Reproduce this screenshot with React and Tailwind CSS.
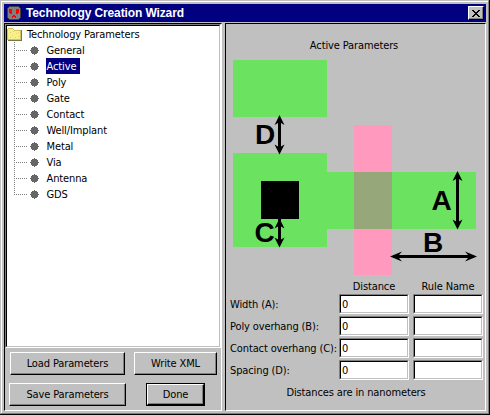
import React from "react";

const items = ["General", "Active", "Poly", "Gate", "Contact", "Well/Implant", "Metal", "Via", "Antenna", "GDS"];

const fields = ["Width (A):", "Poly overhang (B):", "Contact overhang (C):", "Spacing (D):"];

function SocketIcon() {
  return (
    <svg width="16" height="16" viewBox="0 0 16 16" shapeRendering="crispEdges">
      <path d="M3 1h10v1h1v1h1v10h-1v1h-1v1H3v-1H2v-1H1V3h1V2h1z" fill="#404040" />
      <path d="M3 2h10v1h1v10h-1v1H3v-1H2V3h1z" fill="#808080" />
      <path d="M3 4h3v5H4V8H3zM10 4h3v4h-1v1h-2zM7 10h2v1h1v2H9v-1H7v1H6v-2h1z" fill="#ff0000" />
    </svg>
  );
}

function FolderIcon() {
  return (
    <svg width="16" height="16" viewBox="0 0 16 16" shapeRendering="crispEdges">
      <path d="M1 2h5v1h1v1h8v11H1v-1H0V3h1z" fill="#77774c" />
      <path d="M1 2h5v1h1v1h7v10H0V3h1z" fill="#cfc45c" />
      <path d="M1 3h5v1h1v1h6v8H1z" fill="#f7f08c" />
      <path d="M3 6h1v1H3zM6 5h1v1H6zM9 7h1v1H9zM11 6h1v1h-1zM5 9h1v1H5zM11 10h1v1h-1zM8 11h1v1H8zM3 11h1v1H3z" fill="#e2cf72" />
    </svg>
  );
}

function Button({ className, children }) {
  return (
    <button
      className={
        "flex items-center justify-center border border-t-white border-l-white border-r-black border-b-black bg-[#c0c0c0] whitespace-nowrap shadow-[inset_-1px_-1px_0_#808080] " +
        className
      }
    >
      {children}
    </button>
  );
}

function Field({ value }) {
  return (
    <div className="h-5 w-[70px] border border-t-[#808080] border-l-[#808080] border-r-white border-b-white">
      <div className="h-[18px] border border-t-black border-l-black border-r-[#c0c0c0] border-b-[#c0c0c0] bg-white pt-px pl-px">
        {value}
      </div>
    </div>
  );
}

function Diagram() {
  return (
    <svg width="260" height="220" viewBox="226 60 260 220" className="block">
      <g shapeRendering="crispEdges">
        <path d="M233 60h94v57h-94zM233 153h94v19h149v57H327v18h-94z" fill="#6be361" />
        <path d="M354 125h38v150h-38z" fill="#ff99be" />
        <path d="M354 172h38v57h-38z" fill="#96a87a" />
        <path d="M261 181h38v38h-38z" />
      </g>
      <path d="M279.5 118v33M279.5 219v25M457.5 174v52M394 256.5h80" stroke="#000" strokeWidth="3" />
      <path d="M279.5 115l5 10-3.500-2h-3l-3.500 2zM279.500 154.500l5-10-3.500 2h-3l-3.500-2z" />
      <path d="M279.500 218.500l5 10-3.500-2h-3l-3.500 2zM279.500 247.500l5-10-3.500 2h-3l-3.500-2z" />
      <path d="M457.500 171l5 10-3.500-2h-3l-3.500 2zM457.500 229.500l5-10-3.500 2h-3l-3.500-2z" />
      <path d="M390 256.500l12-5-3 3.500v3l3 3.500zM477 256.500l-12-5 3 3.500v3l-3 3.500z" />
      <g className="font-['Liberation_Sans',Arial,sans-serif] text-[28px] font-bold tracking-normal">
        <text x="255" y="144">D</text>
        <text x="254.500" y="242">C</text>
        <text x="431.500" y="210">A</text>
        <text x="423" y="252">B</text>
      </g>
    </svg>
  );
}

export default function App() {
  return (
    <div className="h-[415px] w-[490px] overflow-hidden border-r border-b border-black bg-[#c0c0c0] font-['DejaVu_Sans_Condensed','DejaVu_Sans',sans-serif] text-[11px] leading-4 tracking-[-0.12px] text-black">
      <div className="h-[414px] w-[489px] border-t border-l border-r border-b border-t-[#c0c0c0] border-l-[#c0c0c0] border-r-[#808080] border-b-[#808080]">
        <div className="h-[412px] w-[487px] border-t border-l border-white pt-[2px] pl-[2px]">
          <header className="flex h-[18px] w-[482px] items-center bg-[#000080] pr-[2px] pl-[2px]">
            <SocketIcon />
            <h1 className="ml-[4px] flex-1 font-['Liberation_Sans',Arial,sans-serif] text-[12px] font-bold whitespace-nowrap text-white">
              Technology Creation Wizard
            </h1>
            <button className="flex h-[14px] w-4 items-center justify-center border border-t-white border-l-white border-r-black border-b-black bg-[#c0c0c0] shadow-[inset_-1px_-1px_0_#808080]">
              <svg width="8" height="7" viewBox="0 0 8 7" shapeRendering="crispEdges">
                <path d="M0 0h2v1h1v1h2V1h1V0h2v1H7v1H6v1H5v1h1v1h1v1h1v1H6V6H5V5H3v1H2v1H0V6h1V5h1V4h1V3H2V2H1V1H0z" />
              </svg>
            </button>
          </header>
          <main className="mt-px flex h-[388px] w-[482px]">
            <section className="w-[218px] border-t border-r border-b border-l border-t-black border-r-white border-b-white border-l-black">
              <div className="h-[324px] border border-t-[#808080] border-l-[#808080] border-r-white border-b-white">
                <div className="h-[322px] border border-t-black border-l-black border-r-[#c0c0c0] border-b-[#c0c0c0] bg-white">
                  <div className="flex h-4 items-center">
                    <FolderIcon />
                    <span className="ml-1 h-4 pt-px whitespace-nowrap">Technology Parameters</span>
                  </div>
                  <ul>
                    {items.map((name, i) => (
                      <li key={name} className="flex h-4 items-center pl-[7px]">
                        <svg width="32" height="16" viewBox="0 0 32 16" shapeRendering="crispEdges">
                          <path d={i === items.length - 1 ? "M.5 0V9" : "M.5 0V16"} stroke="#808080" strokeDasharray="1 1" />
                          <path d="M0 8.500H14" stroke="#808080" strokeDasharray="1 1" />
                          <path d="M16 8h9v1h-9zM17 6h7v5h-7zM18 5h5v7h-5zM20 4h1v9h-1z" fill="#666" />
                        </svg>
                        <span
                          className={
                            "h-4 pt-px pl-[0.5px] whitespace-nowrap " + (name === "Active" ? "w-[34px] bg-[#000080] text-white" : "")
                          }
                        >
                          {name}
                        </span>
                      </li>
                    ))}
                  </ul>
                </div>
              </div>
              <div className="mt-[4px] flex pl-[5px]">
                <Button className="h-[23px] w-[115px]">Load Parameters</Button>
                <Button className="ml-[9px] h-[23px] w-[83px]">Write XML</Button>
              </div>
              <div className="mt-[8px] flex pl-[4px]">
                <Button className="h-[23px] w-[117px]">Save Parameters</Button>
                <div className="ml-5 h-[23px] w-[59px] border border-black">
                  <Button className="h-[21px] w-[57px]">Done</Button>
                </div>
              </div>
            </section>
            <section className="ml-[3px] w-[261px] border-t border-r border-b border-l border-t-black border-r-white border-b-white border-l-black">
              <h2 className="h-9 pt-[14px] pr-[3px] text-center">Active Parameters</h2>
              <Diagram />
              <div className="-mt-[2px] grid h-4 grid-cols-[105px_70px_70px] gap-x-[4px] pt-px pl-[4px]">
                <span />
                <span className="text-center">Distance</span>
                <span className="text-center">Rule Name</span>
              </div>
              <div className="grid grid-cols-[105px_70px_70px] gap-x-[4px] gap-y-[2px] pl-[4px]">
                {fields.map((name) => (
                  <React.Fragment key={name}>
                    <span className="pt-[3px] whitespace-nowrap">{name}</span>
                    <Field value="0" />
                    <Field value="" />
                  </React.Fragment>
                ))}
              </div>
              <p className="mt-[5px] pl-[1px] text-center">Distances are in nanometers</p>
            </section>
          </main>
        </div>
      </div>
    </div>
  );
}
